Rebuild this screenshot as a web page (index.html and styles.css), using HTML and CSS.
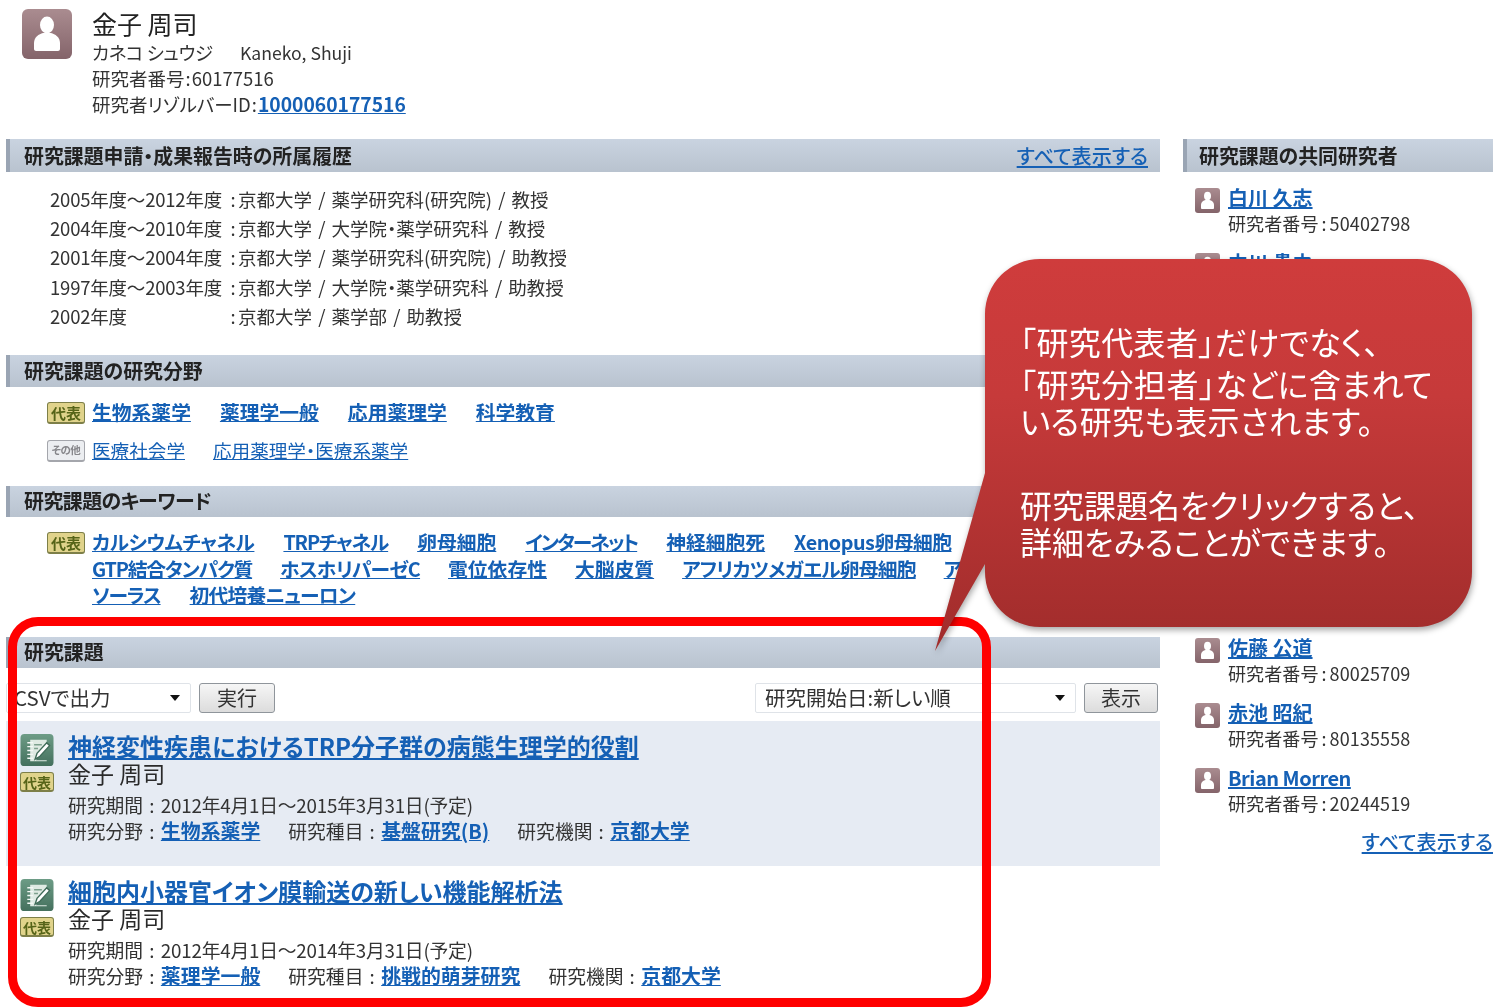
FILE: index.html
```html
<!DOCTYPE html>
<html lang="ja">
<head>
<meta charset="utf-8">
<title>金子 周司</title>
<link rel="stylesheet" href="styles.css">
</head>
<body>
<svg class="defs" width="0" height="0" aria-hidden="true">
  <defs>
    <linearGradient id="personBg" x1="0" y1="0" x2="0" y2="1"><stop offset="0" stop-color="#aa8c90"/><stop offset="1" stop-color="#84646a"/></linearGradient>
    <linearGradient id="noteBg" x1="0" y1="0" x2="0" y2="1"><stop offset="0" stop-color="#6d9c86"/><stop offset="1" stop-color="#44705d"/></linearGradient>
    <linearGradient id="calloutBg" x1="0" y1="0" x2="0" y2="1"><stop offset="0" stop-color="#cf3c3c"/><stop offset="0.35" stop-color="#c63a3a"/><stop offset="1" stop-color="#a02c2b"/></linearGradient>
    <symbol id="person" viewBox="0 0 50 50">
      <rect width="50" height="50" rx="6" fill="url(#personBg)"/>
      <ellipse cx="25" cy="16" rx="7" ry="8.5" fill="#fff"/>
      <path d="M12 40v-6c0-6 5-9 9-10h8c4 1 9 4 9 10v6c0 1-1 2-2 2H14c-1 0-2-1-2-2z" fill="#fff"/>
    </symbol>
    <symbol id="note" viewBox="0 0 34 34">
      <rect width="34" height="33" rx="4" fill="url(#noteBg)"/>
      <path d="M10 6h17v5l-9 10-2 6h11v1H10z" fill="#dfeae3"/>
      <path d="M7 9h6M7 13h6M7 17h6M7 21h6M7 25h6" stroke="#f4f8f5" stroke-width="1.5"/>
      <path d="M15 26l2-6L27 9l3 3-10 11z" fill="#fff" stroke="#3f6b58" stroke-width="1.4"/>
      <path d="M14 11h8M14 15h4" stroke="#7da08d" stroke-width="1.6"/>
    </symbol>
  </defs>
</svg>

<div class="page">
  <header class="profile">
    <svg class="avatar"><use href="#person"/></svg>
    <div class="profile-text">
      <div class="name">金子 周司</div>
      <div class="line"><span class="kana">カネコ シュウジ</span><span class="roman">Kaneko, Shuji</span></div>
      <div class="line line-number">研究者番号<span class="colon">:</span>60177516</div>
      <div class="line">研究者リゾルバーID<span class="colon">:</span><a class="link strong rid" href="#">1000060177516</a></div>
    </div>
  </header>

  <div class="columns">
    <main class="main">
      <section class="history">
        <h2 class="head head-tall"><span>研究課題申請・成果報告時の所属履歴</span><a class="link more" href="#">すべて表示する</a></h2>
        <div class="history-rows">
          <div class="h-row"><span class="h-year">2005年度〜2012年度</span><span><span class="h-colon">:</span>京都大学 / 薬学研究科(研究院) / 教授</span></div>
          <div class="h-row"><span class="h-year">2004年度〜2010年度</span><span><span class="h-colon">:</span>京都大学 / 大学院・薬学研究科 / 教授</span></div>
          <div class="h-row"><span class="h-year">2001年度〜2004年度</span><span><span class="h-colon">:</span>京都大学 / 薬学研究科(研究院) / 助教授</span></div>
          <div class="h-row"><span class="h-year">1997年度〜2003年度</span><span><span class="h-colon">:</span>京都大学 / 大学院・薬学研究科 / 助教授</span></div>
          <div class="h-row"><span class="h-year">2002年度</span><span><span class="h-colon">:</span>京都大学 / 薬学部 / 助教授</span></div>
        </div>
      </section>

      <section class="fields">
        <h2 class="head"><span>研究課題の研究分野</span></h2>
        <div class="tag-row">
          <span class="badge">代表</span>
          <a class="link strong" href="#">生物系薬学</a><a class="link strong" href="#">薬理学一般</a><a class="link strong" href="#">応用薬理学</a><a class="link strong" href="#">科学教育</a>
        </div>
        <div class="tag-row">
          <span class="badge badge-other">その他</span>
          <a class="link" href="#">医療社会学</a><a class="link" href="#">応用薬理学・医療系薬学</a>
        </div>
      </section>

      <section class="keywords">
        <h2 class="head head-short"><span class="tight-s">研究課題のキーワード</span></h2>
        <div class="kw-wrap">
          <span class="badge">代表</span>
          <div class="kw-lines">
            <div class="kw-line"><a class="link strong tight-s" href="#">カルシウムチャネル</a><a class="link strong tight-m" href="#">TRPチャネル</a><a class="link strong" href="#">卵母細胞</a><a class="link strong tight-l" href="#">インターネット</a><a class="link strong" href="#">神経細胞死</a><a class="link strong tight-s" href="#">Xenopus卵母細胞</a></div>
            <div class="kw-line kw-line-close"><a class="link strong tight-m" href="#">GTP結合タンパク質</a><a class="link strong tight-x" href="#">ホスホリパーゼC</a><a class="link strong" href="#">電位依存性</a><a class="link strong" href="#">大脳皮質</a><a class="link strong tight-x" href="#">アフリカツメガエル卵母細胞</a><a class="link strong" href="#">ア</a></div>
            <div class="kw-line"><a class="link strong tight-m" href="#">ソーラス</a><a class="link strong tight-x" href="#">初代培養ニューロン</a></div>
          </div>
        </div>
      </section>

      <section class="projects">
        <h2 class="head head-short"><span>研究課題</span></h2>
        <div class="controls">
          <div class="control-group">
            <div class="select select-csv"><span>CSVで出力</span><i class="caret"></i></div>
            <div class="btn btn-run">実行</div>
          </div>
          <div class="control-group">
            <div class="select select-sort"><span>研究開始日:新しい順</span><i class="caret"></i></div>
            <div class="btn btn-show">表示</div>
          </div>
        </div>

        <article class="item item-alt">
          <div class="item-icons">
            <svg class="note"><use href="#note"/></svg>
            <span class="badge badge-small">代表</span>
          </div>
          <div class="item-body">
            <a class="link strong title" href="#">神経変性疾患におけるTRP分子群の病態生理学的役割</a>
            <div class="author">金子 周司</div>
            <div class="meta">研究期間<span class="m-colon">:</span><span class="date">2012年4月1日〜2015年3月31日(予定)</span></div>
            <div class="meta meta-row"><span>研究分野<span class="m-colon">:</span><a class="link strong" href="#">生物系薬学</a></span><span>研究種目<span class="m-colon">:</span><a class="link strong" href="#">基盤研究(B)</a></span><span>研究機関<span class="m-colon">:</span><a class="link strong" href="#">京都大学</a></span></div>
          </div>
        </article>

        <article class="item">
          <div class="item-icons">
            <svg class="note"><use href="#note"/></svg>
            <span class="badge badge-small">代表</span>
          </div>
          <div class="item-body">
            <a class="link strong title" href="#">細胞内小器官イオン膜輸送の新しい機能解析法</a>
            <div class="author">金子 周司</div>
            <div class="meta">研究期間<span class="m-colon">:</span><span class="date">2012年4月1日〜2014年3月31日(予定)</span></div>
            <div class="meta meta-row"><span>研究分野<span class="m-colon">:</span><a class="link strong" href="#">薬理学一般</a></span><span>研究種目<span class="m-colon">:</span><a class="link strong" href="#">挑戦的萌芽研究</a></span><span>研究機関<span class="m-colon">:</span><a class="link strong" href="#">京都大学</a></span></div>
          </div>
        </article>
      </section>
    </main>

    <aside class="side">
      <h2 class="head head-tall head-side"><span>研究課題の共同研究者</span></h2>
      <div class="people">
        <div class="person"><svg class="avatar-small"><use href="#person"/></svg><div class="person-text"><a class="link strong" href="#">白川 久志</a><div class="number">研究者番号<span class="colon">:</span>50402798</div></div></div>
        <div class="person"><svg class="avatar-small"><use href="#person"/></svg><div class="person-text"><a class="link strong" href="#">中川 貴之</a></div></div>
        <div class="people-gap"></div>
        <div class="person"><svg class="avatar-small"><use href="#person"/></svg><div class="person-text"><a class="link strong" href="#">佐藤 公道</a><div class="number">研究者番号<span class="colon">:</span>80025709</div></div></div>
        <div class="person"><svg class="avatar-small"><use href="#person"/></svg><div class="person-text"><a class="link strong" href="#">赤池 昭紀</a><div class="number">研究者番号<span class="colon">:</span>80135558</div></div></div>
        <div class="person"><svg class="avatar-small"><use href="#person"/></svg><div class="person-text"><a class="link strong latin" href="#">Brian Morren</a><div class="number">研究者番号<span class="colon">:</span>20244519</div></div></div>
        <div class="more-row"><a class="link strong-more" href="#">すべて表示する</a></div>
      </div>
    </aside>
  </div>

  <div class="red-frame"></div>

  <div class="callout">
    <svg class="callout-shape" viewBox="0 0 550 400" width="550" height="400">
      <path d="M105 4H482A55 55 0 0 1 537 59V317A55 55 0 0 1 482 372H105A55 55 0 0 1 50 317V309L0 396L50 218V59A55 55 0 0 1 105 4Z" fill="url(#calloutBg)"/>
    </svg>
    <div class="callout-text">
      <p class="c-first">「研究代表者」だけでなく、</p>
      <p class="c-second">「研究分担者」などに含まれて</p>
      <p class="c-third">いる研究も表示されます。</p>
      <p class="c-fourth">研究課題名をクリックすると、</p>
      <p>詳細をみることができます。</p>
    </div>
  </div>
</div>
</body>
</html>
```

FILE: styles.css
```css
* { box-sizing: border-box; }
html, body { margin: 0; background: #fff; }
body {
  font-family: "Noto Sans CJK JP", "Noto Sans", sans-serif;
  font-size: 18.5px;
  color: #333;
  font-feature-settings: "palt";
}
.defs { position: absolute; }
.page {
  position: relative;
  width: 1500px;
  height: 1007px;
  overflow: hidden;
  filter: blur(0.35px);
}
h2 { margin: 0; }
p { margin: 0; }

.link { color: #1560b5; text-decoration: underline; }
.strong { font-weight: 700; }
.strong-more { font-weight: 500; }
.colon { margin: 0 3px; }

.profile { display: flex; height: 139px; padding: 9px 0 0 22px; }
.avatar { width: 50px; height: 50px; flex: none; }
.profile-text { margin: -1px 0 0 20px; }
.profile-text .colon { margin: 0 1px; }
.name { font-size: 25px; line-height: 30px; color: #222; margin-bottom: 1px; }
.line { line-height: 26.5px; }
.line-number { margin-top: -2px; }
.kana { display: inline-block; width: 148px; letter-spacing: -0.4px; }
.roman { font-size: 17.6px; }
.rid { font-size: 19.3px; }

.columns { display: flex; gap: 23px; padding-left: 6px; }
.main { width: 1154px; flex: none; }
.side { width: 310px; flex: none; }

.head {
  display: flex;
  justify-content: space-between;
  align-items: center;
  height: 32px;
  padding: 0 12px 2px 14px;
  border-left: 4px solid #9aa5b4;
  background: linear-gradient(#c9d3e0, #b9c3cf);
  font-size: 19.9px;
  font-weight: 700;
  color: #222;
}
.head-tall { height: 33px; padding-bottom: 0; }
.head-short { height: 31px; }
.head-side { padding-left: 12px; }
.more { font-weight: 500; font-size: 20.1px; }

.history { height: 216px; }
.history-rows { padding: 13px 0 0 44px; }
.h-row { display: grid; grid-template-columns: 178px auto; justify-content: start; height: 29.2px; line-height: 29px; word-spacing: 2px; }
.h-year { letter-spacing: -0.2px; }
.h-colon { display: inline-block; width: 10px; text-align: center; }

.fields { height: 131px; }
.tag-row { display: flex; align-items: center; height: 38px; padding-left: 41px; font-size: 18.6px; }
.head + .tag-row { margin-top: 7px; }
.tag-row .link { margin: 0 28px 3px 0; }
.tag-row .strong { font-size: 19.8px; margin-right: 29px; }

.badge {
  display: inline-flex;
  align-items: center;
  justify-content: center;
  flex: none;
  width: 38px;
  height: 22px;
  margin-right: 7px;
  border: 1px solid #7d7f48;
  border-bottom-width: 2px;
  border-radius: 3px;
  background: #e0d38b;
  color: #566418;
  font-size: 15px;
  font-weight: 700;
  line-height: 1;
}
.badge-other {
  border-color: #a4a6ac;
  background: #eceef1;
  color: #86868a;
  font-size: 10.5px;
  letter-spacing: -0.5px;
}
.badge-small { width: 34px; height: 20px; margin: 5px 0 0; font-size: 14px; }

.keywords { height: 151px; }
.kw-wrap { display: flex; padding: 15px 0 0 41px; }
.kw-lines { flex: 1; margin-top: -3px; }
.kw-line { display: flex; gap: 29px; height: 26.5px; line-height: 26px; font-size: 19.8px; white-space: nowrap; }
.kw-line-close { gap: 28px; }
.tight-x { letter-spacing: -0.8px; }
.tight-s { letter-spacing: -0.5px; }
.tight-m { letter-spacing: -1.2px; }
.tight-l { letter-spacing: -2px; }

.controls { display: flex; justify-content: space-between; padding: 15px 2px 0 0; height: 53px; }
.control-group { display: flex; gap: 8px; }
.select {
  display: flex;
  align-items: center;
  justify-content: space-between;
  height: 30px;
  padding: 0 10px 2px 9px;
  border: 1px solid #dfe3e8;
  border-radius: 2px;
  background: #fff;
  font-size: 20.5px;
}
.select-csv { width: 185px; padding-left: 7px; }
.select-sort { width: 321px; }
.caret { width: 0; height: 0; margin-top: 2px; border: 5px solid transparent; border-top: 6px solid #111; border-bottom: 0; }
.btn {
  display: flex;
  align-items: center;
  justify-content: center;
  height: 30px;
  padding-bottom: 2px;
  border: 1px solid #8f959b;
  border-radius: 3px;
  background: linear-gradient(#f6f6f6, #dcdcdc);
  font-size: 20px;
}
.btn-run { width: 76px; }
.btn-show { width: 74px; }

.item { display: flex; height: 145px; padding: 13px 0 0 14px; }
.item-alt { background: #e6ebf3; }
.item-icons { display: flex; flex-direction: column; align-items: flex-start; width: 48px; flex: none; }
.note { width: 34px; height: 33px; }
.item-body { display: flex; flex-direction: column; align-items: flex-start; margin-top: -2px; }
.title { font-size: 24px; line-height: 27px; white-space: nowrap; }
.author { font-size: 23px; line-height: 29px; color: #2a2a2a; }
.meta { line-height: 26px; font-size: 18.8px; }
.author + .meta { margin-top: 4px; }
.meta-row { display: flex; gap: 28px; }
.meta-row .link { font-size: 19.9px; }
.m-colon { margin: 0 6.5px 0 6px; }
.date { letter-spacing: -0.22px; }

.people { padding-top: 13px; }
.person { display: flex; height: 65px; padding: 3px 0 0 12px; gap: 8px; line-height: 25px; font-size: 20px; }
.person-text { margin-top: -3px; }
.avatar-small { width: 25px; height: 25px; flex: none; }
.latin { letter-spacing: -0.5px; }
.number { font-size: 18px; line-height: 27px; letter-spacing: 0.1px; }
.people-gap { height: 320px; }
.more-row { display: flex; justify-content: flex-end; margin-top: -1px; font-size: 20.1px; line-height: 26px; }

.red-frame {
  position: absolute;
  left: 8px;
  top: 617px;
  width: 983px;
  height: 390px;
  border: 9px solid #ff0000;
  border-radius: 30px;
}

.callout { position: absolute; left: 935px; top: 255px; width: 550px; height: 400px; }
.callout-shape { display: block; overflow: visible; filter: drop-shadow(1px 3px 3px rgba(0,0,0,.35)); }
.callout-text {
  position: absolute;
  left: 85px;
  top: 67px;
  color: #fff;
  font-size: 32px;
  line-height: 39px;
  white-space: nowrap;
}
.c-first { margin-bottom: 3px; letter-spacing: 0.4px; }
.c-second { margin-bottom: -2px; letter-spacing: 0.5px; }
.c-third { margin-bottom: 45px; letter-spacing: 0.4px; }
.c-fourth { margin-bottom: -2px; }
```
